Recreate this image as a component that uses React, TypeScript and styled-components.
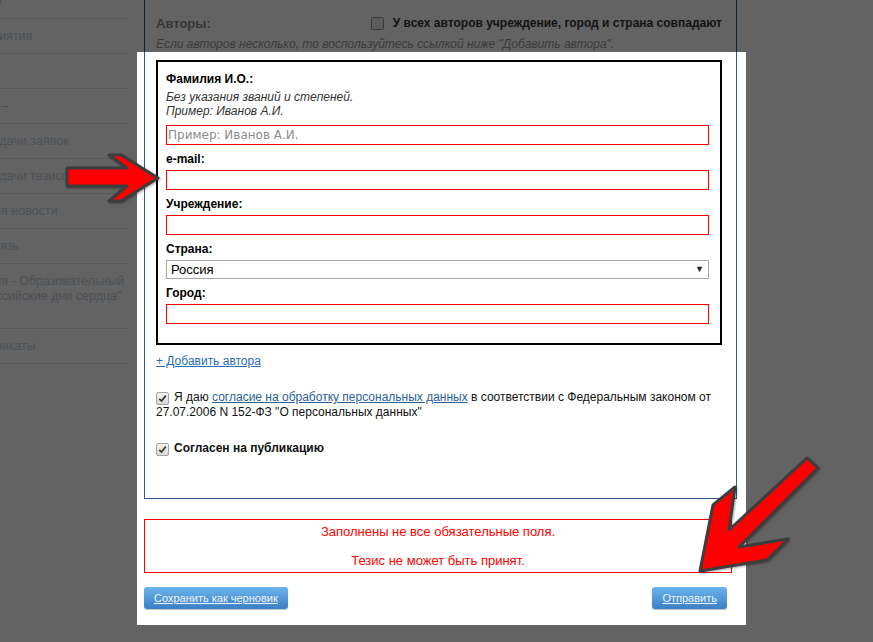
import styled, { createGlobalStyle } from "styled-components";

const GlobalStyle = createGlobalStyle`
  html, body {
    margin: 0;
    padding: 0;
  }
  body {
    font-family: "Liberation Sans", Arial, sans-serif;
    font-size: 12px;
    color: #222;
    background: #fff;
  }
`;

const Screen = styled.div`
  position: relative;
  width: 873px;
  height: 642px;
  overflow: hidden;
  background: #fff;
  display: flex;
  align-items: flex-start;
`;

const Sidebar = styled.ul`
  list-style: none;
  margin: -16px 0 0;
  padding: 0;
  width: 128px;
  flex-shrink: 0;
  overflow: hidden;
`;

const MenuItem = styled.li<{ $cut: number }>`
  padding: 9.5px 0;
  line-height: 15px;
  border-bottom: 1px solid #e0e0e0;
  color: #c3d2df;
  font-size: 12.5px;
  white-space: nowrap;
  & > div {
    margin-left: -${(p) => p.$cut}px;
  }
`;

const Main = styled.div`
  width: 593px;
  margin-left: 16px;
  flex-shrink: 0;
`;

const AuthorsPanel = styled.section`
  border: 1px solid #2d5b8e;
  border-top: none;
  padding: 14px 14px 42px 11px;
`;

const HeaderRow = styled.div`
  display: flex;
  justify-content: space-between;
  align-items: center;
  height: 18px;
`;

const SectionTitle = styled.span`
  font-size: 13px;
  font-weight: bold;
  color: #8f8f8f;
`;

const SameCheck = styled.label`
  display: flex;
  align-items: center;
  gap: 4px;
  font-size: 12px;
  font-weight: bold;
  color: #333;
`;

const Note = styled.p`
  margin: 5px 0 8px;
  line-height: 15px;
  font-style: italic;
  color: #999;
`;

const AuthorBox = styled.div`
  border: 2px solid #000;
  padding: 9.5px 11px 12px 8px;
`;

const Field = styled.div`
  margin-bottom: 7.5px;
`;

const FieldLabel = styled.div`
  font-weight: bold;
  line-height: 15px;
  color: #000;
  margin-bottom: 2.5px;
`;

const Hint = styled.div`
  font-style: italic;
  line-height: 14px;
  color: #333;
  margin: 3.5px 0 6.5px;
`;

const TextInput = styled.input`
  display: block;
  width: 100%;
  height: 20px;
  box-sizing: border-box;
  border: 1px solid #f00;
  padding: 0 1px;
  margin: 0;
  font-family: "DejaVu Sans", Verdana, sans-serif;
  font-size: 12px;
  color: #333;
  background: #fff;
  outline: none;
  &::placeholder {
    color: #8c8c8c;
  }
`;

const SelectBox = styled.div`
  display: flex;
  justify-content: space-between;
  align-items: center;
  height: 19px;
  box-sizing: border-box;
  border: 1px solid #a9a9a9;
  padding: 0 4px;
  font-size: 13px;
  color: #000;
  background: #fff;
`;

const SelectArrow = styled.span`
  font-size: 9px;
  color: #222;
`;

const AddLink = styled.a`
  display: inline-block;
  margin-top: 9px;
  line-height: 15px;
  color: #2a6cb4;
  text-decoration: underline;
`;

const Consent = styled.p<{ $bold?: boolean; $gap: number }>`
  margin: ${(p) => p.$gap}px 0 0;
  line-height: 15px;
  color: #111;
  font-weight: ${(p) => (p.$bold ? "bold" : "normal")};
  & a {
    color: #2a5f96;
    text-decoration: underline;
  }
`;

const Box = styled.span<{ $dim?: boolean }>`
  display: inline-flex;
  align-items: center;
  justify-content: center;
  vertical-align: -2px;
  width: 11px;
  height: 11px;
  margin-right: 5px;
  border: 1px solid ${(p) => (p.$dim ? "#999" : "#a3a3a3")};
  border-radius: 2px;
  background: ${(p) =>
    p.$dim ? "#ececec" : "linear-gradient(#f4f4f4, #d9d9d9)"};
`;

const ErrorBox = styled.div`
  width: 588px;
  box-sizing: border-box;
  margin-top: 20px;
  border: 1px solid #f00;
  padding: 5px 0 3px;
  text-align: center;
  color: #f00;
  font-size: 13px;
  line-height: 14.5px;
`;

const ButtonRow = styled.div`
  display: flex;
  justify-content: space-between;
  width: 583px;
  margin-top: 14px;
`;

const BlueButton = styled.button`
  height: 22px;
  padding: 0 10px;
  border: none;
  border-radius: 3px;
  background: linear-gradient(#6cb4ec, #3b7fc5);
  box-shadow: 0 1px 1px rgba(0, 0, 0, 0.25);
  color: #eef5fc;
  font-family: "Liberation Sans", Arial, sans-serif;
  font-size: 11px;
  text-decoration: underline;
  cursor: pointer;
`;

const Spotlight = styled.div`
  position: absolute;
  left: 137px;
  top: 52px;
  width: 609px;
  height: 573px;
  box-shadow: 0 0 0 1400px rgba(0, 0, 0, 0.61);
  pointer-events: none;
  z-index: 10;
`;

const ArrowSvg = styled.svg<{ $x: number; $y: number }>`
  position: absolute;
  left: ${(p) => p.$x}px;
  top: ${(p) => p.$y}px;
  z-index: 20;
  overflow: visible;
  filter: drop-shadow(1px 1px 1px rgba(0, 0, 0, 0.35));
`;

function CheckBox({ checked, dim }: { checked?: boolean; dim?: boolean }) {
  return (
    <Box $dim={dim}>
      {checked && (
        <svg width="9" height="9" viewBox="0 0 9 9">
          <path
            d="M1.2 4.8 L3.5 7 L7.8 1.6"
            fill="none"
            stroke="#3a3a3a"
            strokeWidth="1.8"
          />
        </svg>
      )}
    </Box>
  );
}

const menu: { cut: number; lines: string[] }[] = [
  { cut: 46, lines: ["Главная"] },
  { cut: 46, lines: ["Мероприятия"] },
  { cut: 46, lines: ["О нас"] },
  { cut: 46, lines: ["Архивы –"] },
  { cut: 53, lines: ["Сроки подачи заявок"] },
  { cut: 53, lines: ["Сроки подачи тезисов"] },
  { cut: 56, lines: ["Последняя новости"] },
  { cut: 73, lines: ["Обратная связь"] },
  {
    cut: 61,
    lines: [
      "Трансляция - Образовательный",
      "курсы \"Российские дни сердца\"",
      "2019",
    ],
  },
  { cut: 44, lines: ["Сертификаты"] },
];

const fields = ["e-mail:", "Учреждение:"];

export default function App() {
  return (
    <>
      <GlobalStyle />
      <Screen>
        <Sidebar>
          {menu.map((item, i) => (
            <MenuItem key={i} $cut={item.cut}>
              {item.lines.map((l, j) => (
                <div key={j}>{l}</div>
              ))}
            </MenuItem>
          ))}
        </Sidebar>

        <Main>
          <AuthorsPanel>
            <HeaderRow>
              <SectionTitle>Авторы:</SectionTitle>
              <SameCheck>
                <CheckBox dim />У всех авторов учреждение, город и страна совпадают
              </SameCheck>
            </HeaderRow>
            <Note>
              Если авторов несколько, то воспользуйтесь ссылкой ниже "Добавить
              автора".
            </Note>

            <AuthorBox>
              <Field>
                <FieldLabel>Фамилия И.О.:</FieldLabel>
                <Hint>
                  Без указания званий и степеней.
                  <br />
                  Пример: Иванов А.И.
                </Hint>
                <TextInput placeholder="Пример: Иванов А.И." />
              </Field>
              {fields.map((f) => (
                <Field key={f}>
                  <FieldLabel>{f}</FieldLabel>
                  <TextInput />
                </Field>
              ))}
              <Field>
                <FieldLabel>Страна:</FieldLabel>
                <SelectBox>
                  <span>Россия</span>
                  <SelectArrow>▼</SelectArrow>
                </SelectBox>
              </Field>
              <Field>
                <FieldLabel>Город:</FieldLabel>
                <TextInput />
              </Field>
            </AuthorBox>

            <AddLink href="#">+ Добавить автора</AddLink>

            <Consent $gap={21}>
              <CheckBox checked />Я даю{" "}
              <a href="#">согласие на обработку персональных данных</a> в
              соответствии с Федеральным законом от 27.07.2006 N 152-ФЗ "О
              персональных данных"
            </Consent>
            <Consent $gap={21} $bold>
              <CheckBox checked />Согласен на публикацию
            </Consent>
          </AuthorsPanel>

          <ErrorBox>
            Заполнены не все обязательные поля.
            <br />
            <br />
            Тезис не может быть принят.
          </ErrorBox>

          <ButtonRow>
            <BlueButton>Сохранить как черновик</BlueButton>
            <BlueButton>Отправить</BlueButton>
          </ButtonRow>
        </Main>

        <Spotlight />

        <ArrowSvg $x={60} $y={150} width="105" height="60" viewBox="0 0 105 60">
          <polygon
            points="7,18 67,18 49,5 61,5 98,28 61,51 49,51 67,36 7,36"
            fill="#ff0000"
            stroke="#3d3d3d"
            strokeWidth="3"
            strokeLinejoin="round"
          />
        </ArrowSvg>
        <ArrowSvg $x={690} $y={450} width="135" height="130" viewBox="0 0 135 130">
          <polygon
            points="10,121 23,55 45,37 39,80 117,8 128,18 49,97 98,89 77,110"
            fill="#ff0000"
            stroke="#3d3d3d"
            strokeWidth="3"
            strokeLinejoin="round"
          />
        </ArrowSvg>
      </Screen>
    </>
  );
}
